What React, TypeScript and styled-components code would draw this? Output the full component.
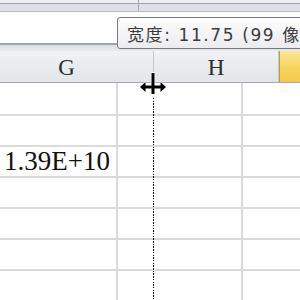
import styled, { createGlobalStyle } from "styled-components"

const GlobalStyle = createGlobalStyle`
  html, body {
    margin: 0;
    padding: 0;
    background: #ffffff;
    overflow: hidden;
  }
`

const COLS = [118, 125, 80]
const ROWS = [33, 31, 31, 31, 31, 31, 31]

interface IHeaderCellProps {
  $width: number
  $selected?: boolean
}

interface ICellProps {
  $width: number
}

export default function App() {
  return (
    <>
      <GlobalStyle />
      <Screen>
        <RibbonEdge>
          <RibbonDivider />
        </RibbonEdge>
        <FormulaBar />
        <Strip />
        <HeaderRow>
          <HeaderCell $width={174}>G</HeaderCell>
          <HeaderCell $width={125}>H</HeaderCell>
          <HeaderCell $width={60} $selected />
        </HeaderRow>
        <Sheet>
          {ROWS.map((height, row) => (
            <Row key={row} style={{ height }}>
              {COLS.map((width, col) => (
                <Cell key={col} $width={width}>
                  {row === 2 && col === 0 ? "1.39E+10" : ""}
                </Cell>
              ))}
            </Row>
          ))}
        </Sheet>

        <Tooltip>宽度: 11.75 (99 像素)</Tooltip>
        <DragLine />
        <ResizeCursor viewBox="0 0 28 24" width="28" height="24">
          <path
            d="M12.5 1 H15.5 V13.6 H21.5 V10 L27 15 L21.5 20 V16.4 H15.5 V22 H12.5 V16.4 H6.5 V20 L1 15 L6.5 10 V13.6 H12.5 Z"
            fill="#000000"
            stroke="#ffffff"
            strokeWidth="1.4"
            strokeLinejoin="round"
            paintOrder="stroke"
          />
        </ResizeCursor>
      </Screen>
    </>
  )
}

const Screen = styled.div`
  position: relative;
  width: 300px;
  height: 300px;
  overflow: hidden;
  background: #ffffff;
`

const RibbonEdge = styled.div`
  position: relative;
  height: 12px;
  box-sizing: border-box;
  background: linear-gradient(#eceef1 0 3px, #9fa3a9 3px 4px, #dde0e5 4px);
  border-bottom: 1px solid #b8bcc2;
`

const RibbonDivider = styled.div`
  margin-left: 138px;
  width: 1px;
  height: 100%;
  background: #a9adb3;
`

const FormulaBar = styled.div`
  height: 31px;
  background: #ffffff;
  border-bottom: 2px solid #a2a6ac;
`

const Strip = styled.div`
  height: 6px;
  background: linear-gradient(#dadde2, #e9ebee);
`

const HeaderRow = styled.div`
  display: flex;
  height: 31px;
  margin-left: -20px;
  border-bottom: 1px solid #a6abb2;
  background: linear-gradient(#f0f2f4, #e2e5e9);
`

const HeaderCell = styled.div<IHeaderCellProps>`
  flex: none;
  width: ${({ $width }) => $width}px;
  box-sizing: border-box;
  display: flex;
  align-items: center;
  justify-content: center;
  padding-top: 2px;
  border-right: 1px solid #c3c7cd;
  font-family: "Liberation Serif", serif;
  font-size: 23px;
  color: #2c2c2c;
  background: ${({ $selected }) =>
    $selected ? "linear-gradient(#fbe695, #f7d35c 55%, #f5c94a)" : "transparent"};
  border-left: ${({ $selected }) => ($selected ? "1px solid #c29f3c" : "none")};
`

const Sheet = styled.div`
  display: flex;
  flex-direction: column;
`

const Row = styled.div`
  display: flex;
  box-sizing: border-box;
  border-bottom: 2px solid #dadada;
`

const Cell = styled.div<ICellProps>`
  flex: none;
  width: ${({ $width }) => $width}px;
  box-sizing: border-box;
  display: flex;
  align-items: flex-end;
  justify-content: flex-end;
  padding: 0 6px 0 0;
  border-right: 2px solid #dadada;
  font-family: "Liberation Serif", serif;
  font-size: 27px;
  line-height: 30px;
  color: #111111;
  white-space: nowrap;
`

const Tooltip = styled.div`
  position: absolute;
  left: 117px;
  top: 17px;
  height: 32px;
  box-sizing: border-box;
  padding: 0 0 0 9px;
  display: flex;
  align-items: center;
  border: 1px solid #767a80;
  border-radius: 3px;
  background: linear-gradient(#fdfdfd, #ececef);
  font-family: "DejaVu Sans", "Noto Sans CJK SC", sans-serif;
  font-size: 17px;
  letter-spacing: 1.6px;
  color: #3c3c3c;
  white-space: nowrap;
`

const DragLine = styled.div`
  position: absolute;
  left: 153px;
  top: 98px;
  bottom: 0;
  width: 1px;
  background: repeating-linear-gradient(#000000 0 1.4px, transparent 1.4px 2.7px);
`

const ResizeCursor = styled.svg`
  position: absolute;
  left: 139px;
  top: 72px;
`
